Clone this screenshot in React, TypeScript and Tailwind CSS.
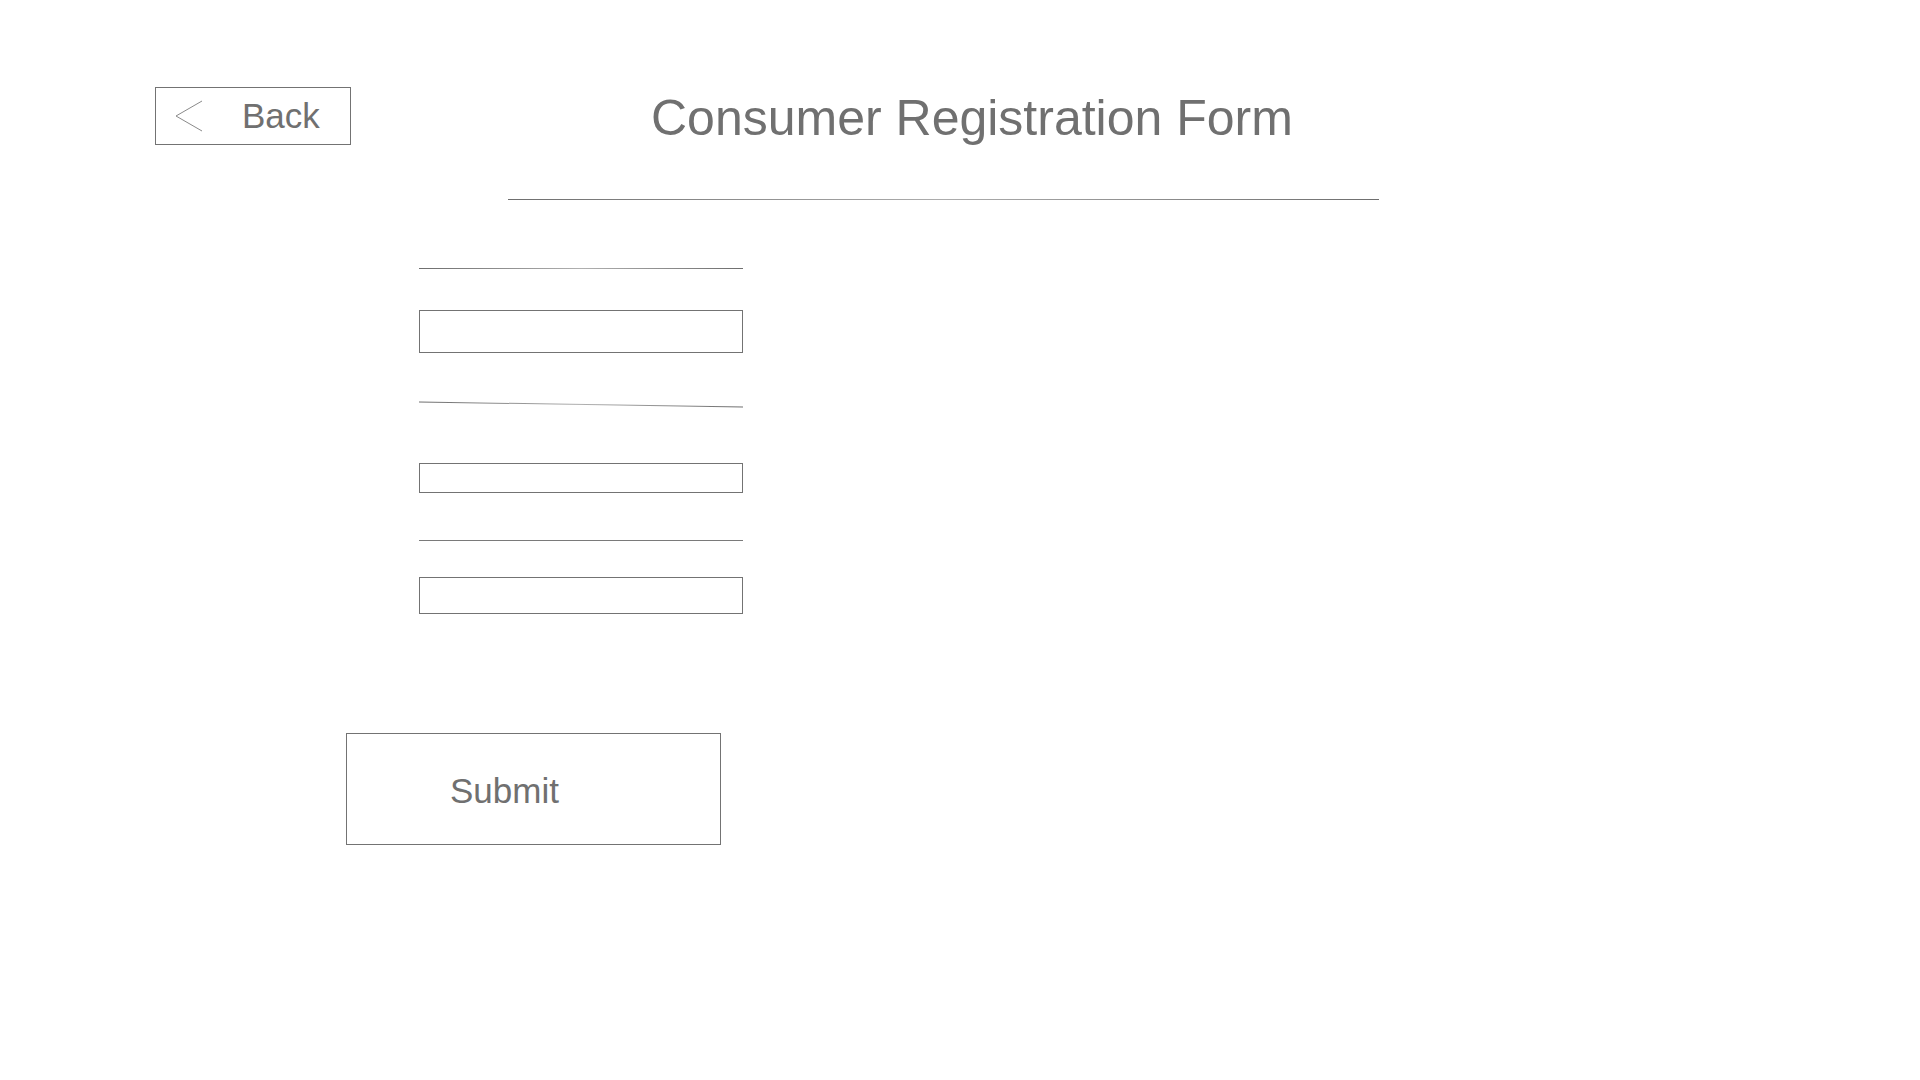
const Field = ({ h }: { h: string }) => (
  <div className={`w-[324px] ${h} border border-[#737373] bg-white`}></div>
);

const App = () => {
  return (
    <section
      className="flex h-[1080px] w-[1920px] flex-col bg-white text-[#707070]"
      style={{ fontFamily: '"Liberation Sans", Arial, sans-serif' }}
    >
      <header className="flex items-start pt-[87px]">
        <button className="ml-[155px] flex h-[58px] w-[196px] items-center border border-[#737373] pb-[2px] text-[35px] leading-none text-[#707070]">
          <svg
            width="28"
            height="32"
            viewBox="0 0 28 32"
            className="ml-[19px] mt-[2px] shrink-0"
          >
            <polyline
              points="27,1 1,16 27,31"
              fill="none"
              stroke="#8a8a8a"
              strokeWidth="1"
            />
          </svg>
          <span className="ml-[39px]">Back</span>
        </button>
        <h1 className="ml-[300px] mt-[6px] text-[50px] font-normal leading-[50px] whitespace-nowrap">
          Consumer Registration Form
        </h1>
      </header>

      <div className="ml-[508px] mt-[54px] h-px w-[871px] bg-linear-to-r from-[#6e6e6e] via-[#adadad] to-[#6e6e6e]"></div>

      <form className="ml-[419px] flex flex-col items-start">
        <div className="mt-[68px] h-px w-[324px] bg-linear-to-r from-[#6e6e6e] via-[#b0b0b0] to-[#6e6e6e]"></div>
        <div className="mt-[41px]">
          <Field h="h-[43px]" />
        </div>
        <div className="mt-[51px] h-px w-[324px] rotate-[0.89deg] bg-linear-to-r from-[#6e6e6e] via-[#b0b0b0] to-[#6e6e6e]"></div>
        <div className="mt-[58px]">
          <Field h="h-[30px]" />
        </div>
        <div className="mt-[47px] h-px w-[324px] bg-[#7a7a7a]"></div>
        <div className="mt-[36px]">
          <Field h="h-[37px]" />
        </div>
      </form>

      <button className="ml-[346px] mt-[119px] flex h-[112px] w-[375px] items-center border border-[#737373] pl-[103px] pt-[3px] text-[35px] leading-none text-[#707070]">
        Submit
      </button>
    </section>
  );
};

export default App;
